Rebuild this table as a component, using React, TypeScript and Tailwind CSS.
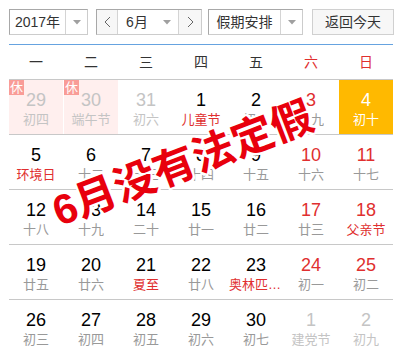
import type { ReactNode } from 'react';

type Day = {
  n: number;
  sub: string;
  muted?: boolean;
  rest?: boolean;
  redNum?: boolean;
  redSub?: boolean;
  today?: boolean;
};

const weeks: Day[][] = [
  [
    { n: 29, sub: '初四', muted: true, rest: true },
    { n: 30, sub: '端午节', muted: true, rest: true },
    { n: 31, sub: '初六', muted: true },
    { n: 1, sub: '儿童节', redSub: true },
    { n: 2, sub: '初八' },
    { n: 3, sub: '初九', redNum: true },
    { n: 4, sub: '初十', today: true },
  ],
  [
    { n: 5, sub: '环境日', redSub: true },
    { n: 6, sub: '十二' },
    { n: 7, sub: '十三' },
    { n: 8, sub: '十四' },
    { n: 9, sub: '十五' },
    { n: 10, sub: '十六', redNum: true },
    { n: 11, sub: '十七', redNum: true },
  ],
  [
    { n: 12, sub: '十八' },
    { n: 13, sub: '十九' },
    { n: 14, sub: '二十' },
    { n: 15, sub: '廿一' },
    { n: 16, sub: '廿二' },
    { n: 17, sub: '廿三', redNum: true },
    { n: 18, sub: '父亲节', redNum: true, redSub: true },
  ],
  [
    { n: 19, sub: '廿五' },
    { n: 20, sub: '廿六' },
    { n: 21, sub: '夏至', redSub: true },
    { n: 22, sub: '廿八' },
    { n: 23, sub: '奥林匹克日', redSub: true },
    { n: 24, sub: '初一', redNum: true },
    { n: 25, sub: '初二', redNum: true },
  ],
  [
    { n: 26, sub: '初三' },
    { n: 27, sub: '初四' },
    { n: 28, sub: '初五' },
    { n: 29, sub: '初六' },
    { n: 30, sub: '初七' },
    { n: 1, sub: '建党节', muted: true },
    { n: 2, sub: '初九', muted: true },
  ],
];

const weekdays = ['一', '二', '三', '四', '五', '六', '日'];

function Caret() {
  return (
    <svg width="8" height="5" viewBox="0 0 8 5">
      <path d="M0 0h8L4 4.5z" fill="#a0a0a0" />
    </svg>
  );
}

function Chevron({ dir }: { dir: 'left' | 'right' }) {
  return (
    <svg width="7" height="12" viewBox="0 0 7 12">
      <path
        d={dir === 'left' ? 'M6 1L1 6l5 5' : 'M1 1l5 5-5 5'}
        fill="none"
        stroke="#666"
        strokeWidth="1"
      />
    </svg>
  );
}

function SelectBox({ width, labelWidth, children }: { width: string; labelWidth: string; children: ReactNode }) {
  return (
    <div className={`flex h-[26px] ${width} border border-[#ccc] border-t-[#a8a8a8] border-l-[#a8a8a8] bg-white`}>
      <div className={`${labelWidth} flex items-center justify-center text-[14px] text-[#333]`}>{children}</div>
      <div className="flex-1 flex items-center justify-center border-l border-[#d4d4d4]">
        <Caret />
      </div>
    </div>
  );
}

function Cell({ d }: { d: Day }) {
  let numColor = 'text-black';
  let subColor = 'text-[#999]';
  if (d.muted) {
    numColor = 'text-[#c4c4c4]';
    subColor = 'text-[#c4c4c4]';
  }
  if (d.redNum) numColor = 'text-[#e02f2f]';
  if (d.redSub) subColor = 'text-[#e02f2f]';
  if (d.today) {
    numColor = 'text-white';
    subColor = 'text-white';
  }
  const bg = d.today ? 'bg-[#ffb900]' : d.rest ? 'bg-[#ffefee]' : '';

  return (
    <div className={`relative h-full flex flex-col items-center pt-[10px] ${bg}`}>
      {d.rest && (
        <span className="absolute left-0 top-0 w-[15px] h-[15px] bg-[#f99c97] text-white text-[13px] leading-[15px] text-center">
          休
        </span>
      )}
      <span className={`font-['Liberation_Sans',sans-serif] text-[18px] leading-[20px] ${numColor}`}>{d.n}</span>
      <span className={`max-w-[54px] truncate text-[13px] leading-[19px] ${subColor}`}>{d.sub}</span>
    </div>
  );
}

export default function App() {
  return (
    <div className="relative w-[404px] h-[364px] overflow-hidden bg-white font-['Liberation_Sans','Noto_Sans_CJK_SC',sans-serif]">
      {/* Toolbar */}
      <div className="flex items-start pt-[9px] pl-[9px]">
        <SelectBox width="w-[79px]" labelWidth="w-[55px]">2017年</SelectBox>

        <div className="ml-[8px] flex h-[26px] border border-[#ccc] border-t-[#a8a8a8] border-l-[#a8a8a8]">
          <div className="w-[21px] flex items-center justify-center bg-[#f7f7f7] border-r border-[#d4d4d4]">
            <Chevron dir="left" />
          </div>
          <div className="w-[60px] flex items-center bg-white">
            <span className="w-[38px] text-center text-[14px] text-[#333]">6月</span>
            <span className="flex-1 flex justify-center">
              <Caret />
            </span>
          </div>
          <div className="w-[23px] flex items-center justify-center bg-[#f7f7f7] border-l border-[#d4d4d4]">
            <Chevron dir="right" />
          </div>
        </div>

        <div className="ml-[6px]">
          <SelectBox width="w-[95px]" labelWidth="w-[71px]">假期安排</SelectBox>
        </div>

        <button className="ml-[9px] w-[82px] h-[26px] border border-[#d0d0d0] bg-[#f7f7f7] text-[14px] text-[#333]">
          返回今天
        </button>
      </div>

      {/* Calendar */}
      <div className="mx-[9px] mt-[9px] w-[384px] border-t border-[#66a3e0]">
        <div className="grid grid-cols-7 gap-x-px h-[35px] items-center border-b border-[#c8c8c8] text-[14px]">
          {weekdays.map((w, i) => (
            <div key={w} className={`text-center ${i >= 5 ? 'text-[#e02f2f]' : 'text-[#333]'}`}>
              {w}
            </div>
          ))}
        </div>
        {weeks.map((week, wi) => (
          <div
            key={wi}
            className={`grid grid-cols-7 gap-x-px h-[55px] ${wi < weeks.length - 1 ? 'border-b border-[#c8c8c8]' : ''}`}
          >
            {week.map((d, di) => (
              <Cell key={di} d={d} />
            ))}
          </div>
        ))}
      </div>

      {/* Stamp */}
      <div className="absolute left-[183px] top-[164px] -translate-x-1/2 -translate-y-1/2 rotate-[-21deg] whitespace-nowrap text-[42px] leading-none font-bold text-[#e8000d] [text-shadow:2px_0_#fff,-2px_0_#fff,0_2px_#fff,0_-2px_#fff,2px_2px_#fff,-2px_-2px_#fff,2px_-2px_#fff,-2px_2px_#fff]">
        6月没有法定假
      </div>
    </div>
  );
}
